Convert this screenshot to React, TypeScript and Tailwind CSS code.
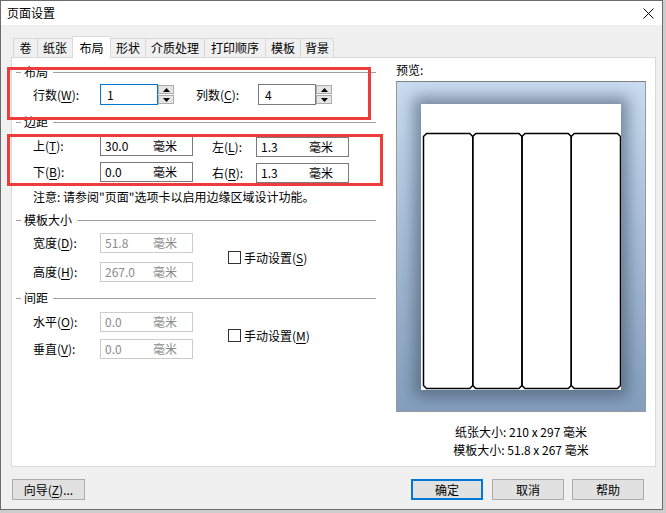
import React from "react";

const Acc = ({ t, k, colon = true }: { t: string; k: string; colon?: boolean }) => (
  <span>
    {t}(<u className="underline-offset-2">{k}</u>){colon ? ":" : ""}
  </span>
);

const Header = ({ title }: { title: string }) => (
  <div className="flex items-center h-[14px]">
    <div className="w-[5px] h-px bg-[#a0a0a0]" />
    <span className="ml-[3px] mr-[5px] leading-[14px]">{title}</span>
    <div className="flex-1 h-px bg-[#a0a0a0]" />
  </div>
);

const Field = ({ value, disabled = false }: { value: string; disabled?: boolean }) => (
  <div
    className={`w-[93px] h-[20px] border bg-white flex items-center pl-[4px] ${
      disabled ? "border-[#cccccc] text-[#8a8a8a]" : "border-[#7a7a7a] text-black"
    }`}
  >
    <span className="w-[48px]">{value}</span>
    <span>毫米</span>
  </div>
);

const Tri = ({ up }: { up: boolean }) => (
  <svg width="7" height="4" viewBox="0 0 7 4">
    {up ? <path d="M0 4 L3.5 0 L7 4 Z" fill="#000" /> : <path d="M0 0 L7 0 L3.5 4 Z" fill="#000" />}
  </svg>
);

const Spin = ({ value, focused = false }: { value: string; focused?: boolean }) => (
  <div className="flex items-center h-[21px]">
    <div
      className={`w-[58px] h-[21px] border flex items-center pl-[6px] bg-white ${
        focused ? "border-[#0078d7]" : "border-[#7a7a7a]"
      }`}
    >
      {value}
    </div>
    <div className="flex flex-col gap-[1px] w-[16px] h-[19px]">
      <div className="h-[9px] border border-[#adadad] bg-[#e5e5e5] flex items-center justify-center">
        <Tri up />
      </div>
      <div className="h-[9px] border border-[#adadad] bg-[#e5e5e5] flex items-center justify-center">
        <Tri up={false} />
      </div>
    </div>
  </div>
);

const Check = ({ k }: { k: string }) => (
  <div className="flex items-center">
    <div className="w-[13px] h-[13px] border border-[#333333] bg-white" />
    <span className="ml-[3px]">
      手动设置(<u className="underline-offset-2">{k}</u>)
    </span>
  </div>
);

const Btn = ({ children, primary = false, w }: { children: React.ReactNode; primary?: boolean; w: string }) => (
  <div
    className={`${w} h-[21px] bg-[#e1e1e1] flex items-center justify-center ${
      primary ? "border-2 border-[#0078d7]" : "border border-[#adadad]"
    }`}
  >
    {children}
  </div>
);

const tabs = [
  { t: "卷", w: "w-[25px]" },
  { t: "纸张", w: "w-[36px]" },
  { t: "布局", w: "w-[39px]", sel: true },
  { t: "形状", w: "w-[36px]" },
  { t: "介质处理", w: "w-[60px]" },
  { t: "打印顺序", w: "w-[62px]" },
  { t: "模板", w: "w-[36px]" },
  { t: "背景", w: "w-[34px]" },
];

const Preview = () => {
  const cols = [0, 1, 2, 3];
  const cw = 49.25;
  const y0 = 29.5;
  const y1 = 284.5;
  const c = 3;
  return (
    <svg width="200" height="286" viewBox="0 0 200 286">
      {cols.map((i) => {
        const x0 = 2.5 + i * cw;
        const x1 = x0 + cw;
        return (
          <path
            key={i}
            d={`M${x0} ${y0 + c} L${x0 + c} ${y0} L${x1 - c} ${y0} L${x1} ${y0 + c} L${x1} ${y1 - c} L${x1 - c} ${y1} L${x0 + c} ${y1} L${x0} ${y1 - c} Z`}
            fill="none"
            stroke="#000"
            strokeWidth="1.5"
          />
        );
      })}
    </svg>
  );
};

export default function App() {
  return (
    <div className="relative w-[666px] h-[513px] bg-[#cdcdcd] overflow-hidden font-['Noto_Sans_CJK_SC',sans-serif] text-[12px] leading-[16px] text-black">
      <div className="w-[663px] h-[510px] border border-[#6b6b6b] flex flex-col bg-[#f0f0f0]">
        {/* title bar */}
        <div className="h-[24px] bg-white flex items-center justify-between pl-[6px] pr-[8px]">
          <span className="text-[12px]">页面设置</span>
          <svg width="11" height="11" viewBox="0 0 11 11">
            <path d="M0.5 0.5 L10.5 10.5 M10.5 0.5 L0.5 10.5" stroke="#000" strokeWidth="1" />
          </svg>
        </div>

        {/* body */}
        <div className="flex-1 flex flex-col pt-[11px]">
          {/* tabs */}
          <div className="flex items-end h-[21px] ml-[12px]">
            {tabs.map((tb, i) => (
              <div
                key={tb.t}
                className={`${tb.w} ${i > 0 ? "-ml-px" : ""} flex items-center justify-center border-l border-t border-r border-[#d9d9d9] ${
                  tb.sel ? "relative z-10 h-[22px] -mb-px bg-white" : "h-[19px] bg-[#f0f0f0]"
                }`}
              >
                {tb.t}
              </div>
            ))}
          </div>

          {/* panel */}
          <div className="ml-[10px] w-[645px] h-[410px] border border-[#d9d9d9] bg-white flex">
            {/* left column */}
            <div className="w-[364px] pl-[4px] flex flex-col">
              <div className="mt-[7px]">
                <Header title="布局" />
              </div>
              <div className="mt-[5px] pl-[17px] flex items-center h-[21px]">
                <span className="w-[67px]">
                  <Acc t="行数" k="W" />
                </span>
                <Spin value="1" focused />
                <span className="ml-[22px] w-[62px]">
                  <Acc t="列数" k="C" />
                </span>
                <Spin value="4" />
              </div>

              <div className="mt-[10px]">
                <Header title="边距" />
              </div>
              <div className="mt-[7px] pl-[17px] flex items-start h-[20px]">
                <div className="flex items-center">
                  <span className="w-[67px]">
                    <Acc t="上" k="T" />
                  </span>
                  <Field value="30.0" />
                </div>
                <div className="flex items-center ml-[19px] mt-[1px]">
                  <span className="w-[44px]">
                    <Acc t="左" k="L" />
                  </span>
                  <Field value="1.3" />
                </div>
              </div>
              <div className="mt-[6px] pl-[17px] flex items-start h-[20px]">
                <div className="flex items-center">
                  <span className="w-[67px]">
                    <Acc t="下" k="B" />
                  </span>
                  <Field value="0.0" />
                </div>
                <div className="flex items-center ml-[19px] mt-[1px]">
                  <span className="w-[44px]">
                    <Acc t="右" k="R" />
                  </span>
                  <Field value="1.3" />
                </div>
              </div>

              <div className="mt-[6px] pl-[17px] h-[17px] flex items-center whitespace-nowrap">
                注意: 请参阅"页面"选项卡以启用边缘区域设计功能。
              </div>

              <div className="mt-[8px]">
                <Header title="模板大小" />
              </div>
              <div className="mt-[6px] pl-[17px] flex items-center">
                <div className="flex flex-col">
                  <div className="flex items-center h-[20px]">
                    <span className="w-[67px]">
                      <Acc t="宽度" k="D" />
                    </span>
                    <Field value="51.8" disabled />
                  </div>
                  <div className="flex items-center h-[20px] mt-[9px]">
                    <span className="w-[67px]">
                      <Acc t="高度" k="H" />
                    </span>
                    <Field value="267.0" disabled />
                  </div>
                </div>
                <div className="ml-[35px]">
                  <Check k="S" />
                </div>
              </div>

              <div className="mt-[9px]">
                <Header title="间距" />
              </div>
              <div className="mt-[7px] pl-[17px] flex items-center">
                <div className="flex flex-col">
                  <div className="flex items-center h-[20px]">
                    <span className="w-[67px]">
                      <Acc t="水平" k="O" />
                    </span>
                    <Field value="0.0" disabled />
                  </div>
                  <div className="flex items-center h-[20px] mt-[7px]">
                    <span className="w-[67px]">
                      <Acc t="垂直" k="V" />
                    </span>
                    <Field value="0.0" disabled />
                  </div>
                </div>
                <div className="ml-[35px]">
                  <Check k="M" />
                </div>
              </div>
            </div>

            {/* right column */}
            <div className="ml-[20px] w-[250px] flex flex-col">
              <div className="mt-[4px] h-[16px]">预览:</div>
              <div className="mt-[3px] h-[331px] border border-[#999999] border-t-[#808080] bg-gradient-to-b from-[#c9dcf1] to-[#849fbc] flex items-center justify-center">
                <div className="w-[200px] h-[286px] bg-white shadow-[0_0_14px_7px_rgba(55,72,95,0.55)]">
                  <Preview />
                </div>
              </div>
              <div className="mt-[11px] flex flex-col items-center leading-[18px]">
                <span>纸张大小: 210 x 297 毫米</span>
                <span>模板大小: 51.8 x 267 毫米</span>
              </div>
            </div>
          </div>

          {/* buttons */}
          <div className="mt-[12px] flex items-center pl-[11px] pr-[18px]">
            <Btn w="w-[73px]">
              <span>
                向导(<u className="underline-offset-2">Z</u>)...
              </span>
            </Btn>
            <div className="flex-1" />
            <Btn w="w-[72px]" primary>
              确定
            </Btn>
            <div className="w-[9px]" />
            <Btn w="w-[72px]">取消</Btn>
            <div className="w-[8px]" />
            <Btn w="w-[72px]">帮助</Btn>
          </div>
        </div>
      </div>

      {/* red annotation boxes */}
      <div className="absolute left-[7px] top-[67px] w-[364px] h-[53px] border-[3px] border-[#ee3b3b] pointer-events-none" />
      <div className="absolute left-[7px] top-[134px] w-[376px] h-[52px] border-[3px] border-[#ee3b3b] pointer-events-none" />
    </div>
  );
}
